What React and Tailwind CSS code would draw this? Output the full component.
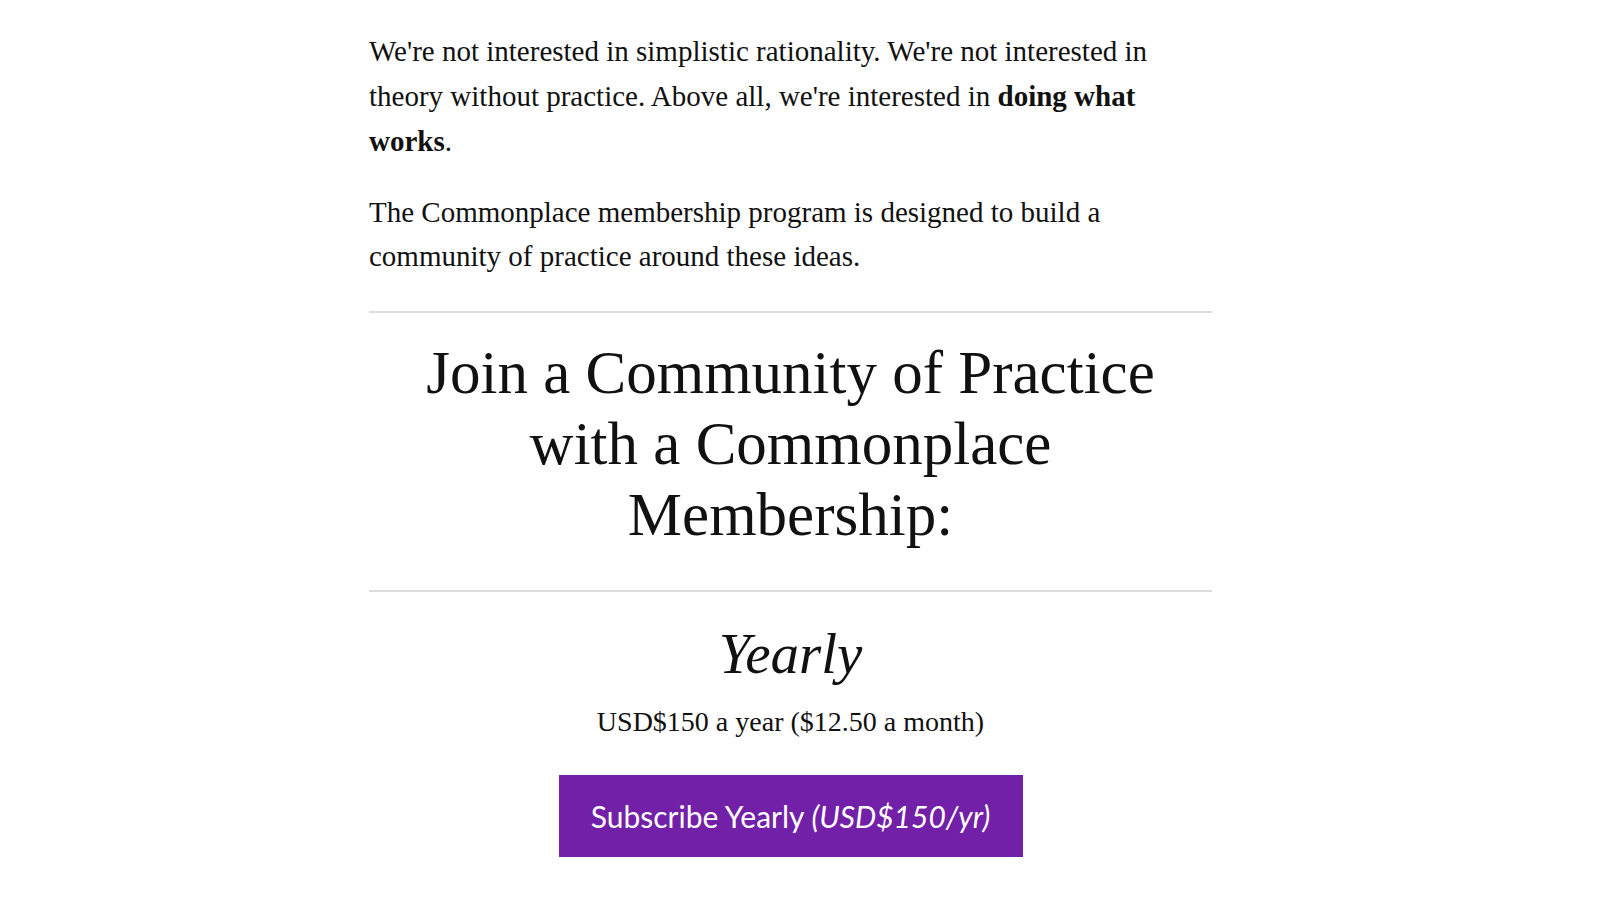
export default function App() {
  const serif = { fontFamily: '"Liberation Serif", "DejaVu Serif", serif' };

  return (
    <div className="min-h-[909px] w-full bg-white text-[#111]">
      <div className="ml-[369px] w-[843px] pt-[29px]" style={serif}>
        <p className="text-[29px] leading-[45px] pr-[20px]">
          We're not interested in simplistic rationality. We're not interested in
          theory without practice. Above all, we're interested in{" "}
          <b>doing what works</b>.
        </p>
        <p className="mt-[26px] text-[29px] leading-[44px] pr-[80px]">
          The Commonplace membership program is designed to build a community of
          practice around these ideas.
        </p>

        <hr className="mt-[33px] border-t-2 border-[#dcdcdc]" />

        <h2 className="pt-[24px] pb-[40px] text-center text-[61px] leading-[71px] px-[40px]">
          Join a Community of Practice with a Commonplace Membership:
        </h2>

        <hr className="border-t-2 border-[#dcdcdc]" />

        <div className="flex flex-col items-center pt-[30px]">
          <div className="text-[57px] italic leading-[64px]">Yearly</div>
          <div className="mt-[18px] text-[28px] leading-[36px]">
            USD$150 a year ($12.50 a month)
          </div>
          <button
            className="mt-[35px] flex h-[82px] w-[464px] items-center justify-center bg-[#7320a8] text-[30px] text-white"
            style={{ fontFamily: 'Lato, "Liberation Sans", sans-serif' }}
          >
            Subscribe Yearly&nbsp;<i>(USD$150/yr)</i>
          </button>
        </div>
      </div>
    </div>
  );
}
